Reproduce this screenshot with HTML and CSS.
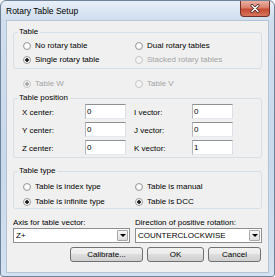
FILE: index.html
```html
<!DOCTYPE html>
<html lang="en">
<head>
    <meta charset="UTF-8">
    <title>Rotary Table Setup</title>
    <link rel="stylesheet" href="styles.css">
</head>
<body>
    <div class="window">
        <div class="titlebar">
            <span class="title">Rotary Table Setup</span>
            <span class="close">
                <svg width="12" height="9" viewBox="0 0 12 9">
                    <path d="M3 1.5 L9 7.5 M9 1.5 L3 7.5" stroke="#4a2a24" stroke-width="3" stroke-linecap="round"/>
                    <path d="M3 1.5 L9 7.5 M9 1.5 L3 7.5" stroke="#ffffff" stroke-width="1.4" stroke-linecap="round"/>
                </svg>
            </span>
        </div>

        <div class="client">
            <fieldset class="group">
                <legend>Table</legend>
                <div class="radios tight">
                    <label class="radio"><span class="dot"></span>No rotary table</label>
                    <label class="radio"><span class="dot"></span>Dual rotary tables</label>
                    <label class="radio"><span class="dot on"></span>Single rotary table</label>
                    <label class="radio off"><span class="dot"></span>Stacked rotary tables</label>
                </div>
            </fieldset>

            <div class="radios free">
                <label class="radio off"><span class="dot on"></span>Table W</label>
                <label class="radio off"><span class="dot"></span>Table V</label>
            </div>

            <fieldset class="group position">
                <legend>Table position</legend>
                <div class="pos-grid">
                    <span class="lbl">X center:</span><span class="edit">0</span>
                    <span class="lbl second">I vector:</span><span class="edit">0</span>
                    <span class="lbl">Y center:</span><span class="edit">0</span>
                    <span class="lbl second">J vector:</span><span class="edit">0</span>
                    <span class="lbl">Z center:</span><span class="edit">0</span>
                    <span class="lbl second">K vector:</span><span class="edit">1</span>
                </div>
            </fieldset>

            <fieldset class="group type">
                <legend>Table type</legend>
                <div class="radios wide">
                    <label class="radio"><span class="dot"></span>Table is index type</label>
                    <label class="radio"><span class="dot"></span>Table is manual</label>
                    <label class="radio"><span class="dot on"></span>Table is infinite type</label>
                    <label class="radio"><span class="dot on"></span>Table is DCC</label>
                </div>
            </fieldset>

            <div class="combos">
                <div class="field">
                    <span class="cap">Axis for table vector:</span>
                    <div class="combo"><span class="val">Z+</span><span class="arrow"></span></div>
                </div>
                <div class="field">
                    <span class="cap">Direction of positive rotation:</span>
                    <div class="combo"><span class="val">COUNTERCLOCKWISE</span><span class="arrow"></span></div>
                </div>
            </div>

            <div class="buttons">
                <span class="btn calibrate">Calibrate...</span>
                <span class="btn ok">OK</span>
                <span class="btn cancel">Cancel</span>
            </div>
        </div>
    </div>
</body>
</html>
```

FILE: styles.css
```css
body {
    margin: 0;
    background: #ffffff;
    font-family: "Liberation Sans", Arial, sans-serif;
    font-size: 8px;
    color: #000;
}
.window {
    width: 275px;
    height: 277px;
    box-sizing: border-box;
    border: 1px solid #6f8297;
    border-radius: 6px 6px 3px 3px;
    background: linear-gradient(#e8eff8, #d0deee 18px, #c8d9ec 60%, #d3e1f0);
    padding: 0 6px 4px;
    display: flex;
    flex-direction: column;
}
.titlebar {
    height: 20px;
    display: flex;
    justify-content: space-between;
    align-items: flex-start;
    margin: 0 -2px 0 -1px;
}
.title {
    font-size: 8.5px;
    line-height: 10px;
    padding-top: 5px;
}
.close {
    width: 30px;
    height: 16px;
    box-sizing: border-box;
    border: 1px solid #6e3128;
    border-top: none;
    border-radius: 0 0 4px 4px;
    background: linear-gradient(#eab0a2, #d9806c 45%, #c54a33 55%, #d7765c);
    display: flex;
    align-items: center;
    justify-content: center;
}
.client {
    flex: 1;
    background: #f0f0f0;
    outline: 1px solid #b3c4d6;
    padding: 6px 6px 0;
    display: flex;
    flex-direction: column;
}
.group {
    margin: 0;
    padding: 0;
    border: 1px solid #d5dfe5;
    border-radius: 3px;
    min-width: 0;
}
.group legend {
    padding: 0 2px 0 1px;
    margin-left: 4px;
    line-height: 10px;
}
.radios {
    display: grid;
    grid-template-columns: 112px 1fr;
    padding: 2px 0 2px 9px;
    row-gap: 1px;
}
.radios.free {
    margin-top: 8px;
    padding: 0 0 0 10px;
}
.radios.wide {
    padding: 4px 0 0 9px;
    row-gap: 2px;
}
.radio {
    display: flex;
    align-items: center;
    gap: 4px;
    height: 13px;
    white-space: nowrap;
}
.radio.off {
    color: #a3a3a3;
}
.dot {
    width: 8px;
    height: 8px;
    box-sizing: border-box;
    border-radius: 50%;
    border: 1px solid #9a9a9a;
    background: radial-gradient(circle, #ffffff 30%, #e2e2e2);
    flex: none;
}
.dot.on {
    background: radial-gradient(circle, #1e1e1e 0 1.5px, #ffffff 2.1px, #e2e2e2);
}
.off .dot {
    border-color: #c6c6c6;
    background: #f4f4f4;
}
.off .dot.on {
    background: radial-gradient(circle, #a8a8a8 0 1.5px, #f4f4f4 2.1px);
}
.position {
    margin-top: 3px;
}
.pos-grid {
    display: grid;
    grid-template-columns: 63px 41px 66px 41px;
    grid-auto-rows: 15px;
    row-gap: 3px;
    padding: 1px 0 2px 8px;
}
.lbl {
    display: flex;
    align-items: center;
    padding-top: 2px;
}
.lbl.second {
    padding-left: 8px;
}
.edit {
    box-sizing: border-box;
    background: #fff;
    border: 1px solid;
    border-color: #8e8f8f #dbdfe6 #e3e9ef #b5b8bd;
    padding-left: 1px;
    display: flex;
    align-items: center;
}
.type {
    margin-top: 8px;
}
.combos {
    margin-top: 9px;
    display: grid;
    grid-template-columns: 117px 127px;
    column-gap: 5px;
}
.field {
    display: flex;
    flex-direction: column;
}
.cap {
    line-height: 10px;
}
.combo {
    height: 15px;
    box-sizing: border-box;
    border: 1px solid #8e8f8f;
    background: #fff;
    display: flex;
    align-items: stretch;
}
.val {
    flex: 1;
    padding-left: 2px;
    display: flex;
    align-items: center;
}
.arrow {
    width: 9px;
    margin: 1px;
    border: 1px solid #a7a7a7;
    border-radius: 1px;
    background: linear-gradient(#f6f6f6, #dedede);
    display: flex;
    align-items: center;
    justify-content: center;
}
.arrow::after {
    content: "";
    border-left: 3px solid transparent;
    border-right: 3px solid transparent;
    border-top: 3px solid #000;
}
.buttons {
    margin-top: 4px;
    display: flex;
    justify-content: flex-end;
    gap: 4px;
    padding-right: 1px;
}
.btn {
    height: 15px;
    box-sizing: border-box;
    border: 1px solid #707070;
    border-radius: 3px;
    background: linear-gradient(#f2f2f2, #ebebeb 50%, #dddddd 50%, #cfcfcf);
    display: flex;
    align-items: center;
    justify-content: center;
}
.calibrate { width: 73px; }
.ok { width: 57px; }
.cancel { width: 53px; }
```
